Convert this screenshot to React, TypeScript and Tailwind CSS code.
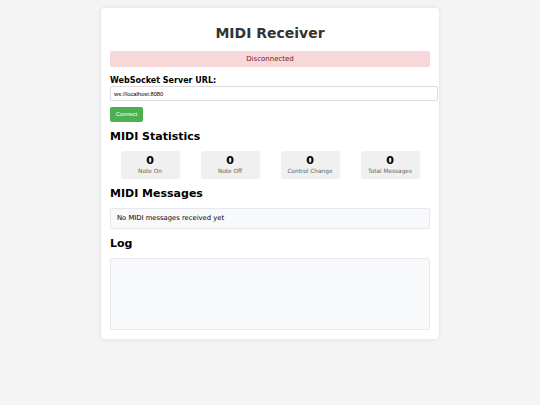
import React, { useState } from 'react';

const stats = [
  { label: 'Note On', value: 0 },
  { label: 'Note Off', value: 0 },
  { label: 'Control Change', value: 0 },
  { label: 'Total Messages', value: 0 },
];

export default function App() {
  const [url, setUrl] = useState('ws://localhost:8080');

  return (
    <div className="min-h-screen bg-[#f4f4f4] pt-[8px] font-['DejaVu_Sans',sans-serif]">
      <div className="mx-auto w-[338px] rounded-[4px] bg-white px-[9px] pt-[17px] pb-[9px] shadow-[0_0_4px_rgba(0,0,0,0.1)]">
        {/* Header */}
        <h1 className="text-center text-[14px] leading-[17px] font-bold text-[#333]">MIDI Receiver</h1>

        <div className="mt-[9px] flex h-[16px] items-center justify-center rounded-[2px] bg-[#f8d7da] text-[7px] text-[#721c24]">
          Disconnected
        </div>

        {/* Connection */}
        <label className="mt-[9px] block text-[8px] leading-[10px] font-bold text-black">WebSocket Server URL:</label>
        <input
          value={url}
          onChange={(e) => setUrl(e.target.value)}
          className="mt-0 box-content block h-[11px] w-[320px] rounded-[2px] border border-[#ddd] px-[3px] py-[1px] font-['Liberation_Sans',sans-serif] text-[5.8px] text-black outline-none"
        />
        <button className="mt-[6px] flex h-[15px] w-[33px] items-center justify-center rounded-[2px] bg-[#4caf50] font-['Liberation_Sans',sans-serif] text-[5.8px] text-white">
          Connect
        </button>

        {/* Stats */}
        <h2 className="mt-[8px] text-[11px] leading-[13px] font-bold text-black">MIDI Statistics</h2>
        <div className="mt-[8px] flex justify-around">
          {stats.map((s) => (
            <div key={s.label} className="flex h-[28px] w-[59px] flex-col items-center justify-center rounded-[2px] bg-[#f0f0f0]">
              <div className="text-[11px] leading-[12px] font-bold text-black">{s.value}</div>
              <div className="text-[5.8px] leading-[8px] text-[#666]">{s.label}</div>
            </div>
          ))}
        </div>

        {/* Messages */}
        <h2 className="mt-[8px] text-[11px] leading-[13px] font-bold text-black">MIDI Messages</h2>
        <div className="mt-[8px] flex h-[21px] items-center rounded-[2px] border border-[#e6e8eb] bg-[#f8f9fa] px-[6px] text-[6.8px] text-black">
          No MIDI messages received yet
        </div>

        {/* Log */}
        <h2 className="mt-[8px] text-[11px] leading-[13px] font-bold text-black">Log</h2>
        <div className="mt-[8px] h-[72px] rounded-[2px] border border-[#e6e8eb] bg-[#f8f9fa]"></div>
      </div>
    </div>
  );
}
